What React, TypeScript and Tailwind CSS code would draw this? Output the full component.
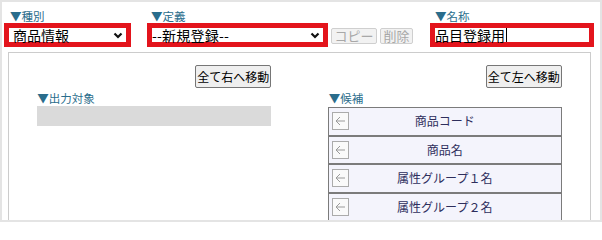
import React from "react"

const font = { fontFamily: '"Noto Sans CJK JP", "Noto Sans", sans-serif' }

function Chevron() {
  return (
    <svg width="10" height="7" viewBox="0 0 10 7" className="shrink-0">
      <path d="M1.5 1.5 L5 5 L8.5 1.5" fill="none" stroke="#111" strokeWidth="2.2" />
    </svg>
  )
}

function ArrowBox() {
  return (
    <div className="ml-[3px] w-[17px] h-[18px] shrink-0 border border-[#ababab] bg-[#fafafa] flex items-center justify-center">
      <svg width="11" height="10" viewBox="0 0 11 10">
        <path d="M1 5 H10 M5 1 L1 5 L5 9" fill="none" stroke="#9a9a9a" strokeWidth="1" />
      </svg>
    </div>
  )
}

const candidates = ["商品コード", "商品名", "属性グループ１名", "属性グループ２名"]

export default function App() {
  return (
    <div className="w-[602px] h-[222px] bg-[#e4e4e4] p-[2px]" style={font}>
      <div className="bg-white h-full overflow-hidden">
        {/* top row */}
        <div className="flex items-start pt-[8px]">
          <div className="ml-[2px]">
            <div className="pl-[6px] text-[11.5px] leading-[13px] h-[13px] text-[#2a6d8c]">▼種別</div>
            <div className="w-[127px] h-[24px] border-[5px] border-[#e3141c] bg-white flex items-center pl-[4px] pr-[3px]">
              <span className="flex-1 text-[14px] leading-[14px] text-black">商品情報</span>
              <Chevron />
            </div>
          </div>
          <div className="ml-[16px]">
            <div className="pl-[4px] text-[11.5px] leading-[13px] h-[13px] text-[#2a6d8c]">▼定義</div>
            <div className="w-[181px] h-[24px] border-[5px] border-[#e3141c] bg-white flex items-center pr-[3px]">
              <span className="flex-1 text-[14px] leading-[14px] text-black tracking-[0.2px]">--新規登録--</span>
              <Chevron />
            </div>
          </div>
          <button className="ml-[3px] mt-[18px] w-[46px] h-[16px] border border-[#cfcfcf] rounded-[2px] bg-[#f2f2f2] text-[13px] leading-[14px] text-[#a8a8a8] flex items-center justify-center">
            コピー
          </button>
          <button className="ml-[3px] mt-[18px] w-[33px] h-[16px] border border-[#cfcfcf] rounded-[2px] bg-[#f2f2f2] text-[13px] leading-[14px] text-[#a8a8a8] flex items-center justify-center">
            削除
          </button>
          <div className="ml-[17px]">
            <div className="pl-[5px] text-[11.5px] leading-[13px] h-[13px] text-[#2a6d8c]">▼名称</div>
            <div className="w-[164px] h-[24px] border-[5px] border-[#e3141c] bg-white flex items-center">
              <span className="text-[14px] leading-[14px] text-black">品目登録用</span>
              <span className="w-px h-[14px] bg-black ml-[1px]" />
            </div>
          </div>
        </div>

        {/* panel */}
        <div className="ml-[6px] mt-[5px] w-[583px] h-[200px] border border-b-0 border-[#cccccc] grid grid-cols-2">
          <div className="w-[234px] mx-auto pt-[12px]">
            <div className="flex justify-end">
              <button className="w-[76px] h-[23px] border border-[#767676] rounded-[2px] bg-[#efefef] text-[12px] text-black whitespace-nowrap flex items-center justify-center">
                全て右へ移動
              </button>
            </div>
            <div className="mt-[4px] text-[11.5px] leading-[13px] h-[13px] text-[#2a6d8c]">▼出力対象</div>
            <div className="mt-[1px] h-[20px] bg-[#dadada]" />
          </div>
          <div className="w-[234px] mx-auto pt-[12px]">
            <div className="flex justify-end">
              <button className="w-[76px] h-[23px] border border-[#767676] rounded-[2px] bg-[#efefef] text-[12px] text-black whitespace-nowrap flex items-center justify-center">
                全て左へ移動
              </button>
            </div>
            <div className="mt-[4px] pl-[1px] text-[11.5px] leading-[13px] h-[13px] text-[#2a6d8c]">▼候補</div>
            <div className="mt-[2px]">
              {candidates.map((c) => (
                <div key={c} className="h-[28.5px] border border-[#7b7b7b] bg-[#f4f4fc] flex items-center">
                  <ArrowBox />
                  <span className="flex-1 text-center pr-[20px] text-[12px] text-[#2e2e5c] whitespace-nowrap">{c}</span>
                </div>
              ))}
            </div>
          </div>
        </div>
      </div>
    </div>
  )
}
